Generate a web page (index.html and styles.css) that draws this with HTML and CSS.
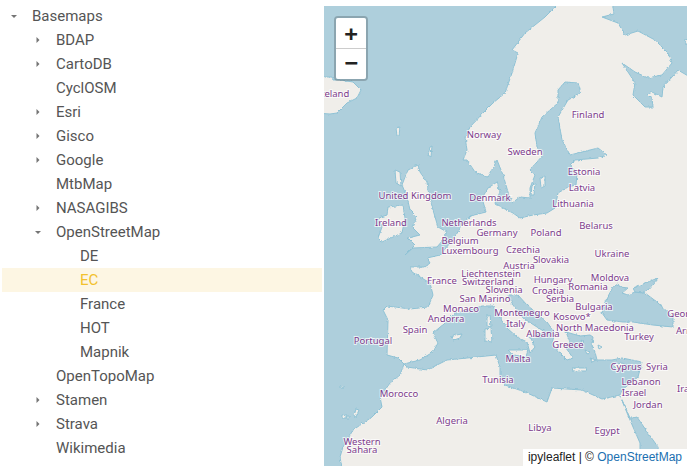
FILE: index.html
```html
<!DOCTYPE html>
<html lang="en">
<head>
<meta charset="utf-8">
<title>Basemaps</title>
<link rel="stylesheet" href="styles.css">
</head>
<body>
<main class="page">
  <nav class="tree">
    <div class="row l0"><svg class="caret" viewBox="0 0 24 24"><path d="M9 11h6l-3 3z"/></svg><span>Basemaps</span></div>
    <div class="row l1"><svg class="caret" viewBox="0 0 24 24"><path d="M10.500 9v6l3-3z"/></svg><span>BDAP</span></div>
    <div class="row l1"><svg class="caret" viewBox="0 0 24 24"><path d="M10.500 9v6l3-3z"/></svg><span>CartoDB</span></div>
    <div class="row l1"><i class="caret"></i><span>CyclOSM</span></div>
    <div class="row l1"><svg class="caret" viewBox="0 0 24 24"><path d="M10.500 9v6l3-3z"/></svg><span>Esri</span></div>
    <div class="row l1"><svg class="caret" viewBox="0 0 24 24"><path d="M10.500 9v6l3-3z"/></svg><span>Gisco</span></div>
    <div class="row l1"><svg class="caret" viewBox="0 0 24 24"><path d="M10.500 9v6l3-3z"/></svg><span>Google</span></div>
    <div class="row l1"><i class="caret"></i><span>MtbMap</span></div>
    <div class="row l1"><svg class="caret" viewBox="0 0 24 24"><path d="M10.500 9v6l3-3z"/></svg><span>NASAGIBS</span></div>
    <div class="row l1"><svg class="caret" viewBox="0 0 24 24"><path d="M9 11h6l-3 3z"/></svg><span>OpenStreetMap</span></div>
    <div class="row l2"><i class="caret"></i><span>DE</span></div>
    <div class="row l2 active"><i class="caret"></i><span>EC</span></div>
    <div class="row l2"><i class="caret"></i><span>France</span></div>
    <div class="row l2"><i class="caret"></i><span>HOT</span></div>
    <div class="row l2"><i class="caret"></i><span>Mapnik</span></div>
    <div class="row l1"><i class="caret"></i><span>OpenTopoMap</span></div>
    <div class="row l1"><svg class="caret" viewBox="0 0 24 24"><path d="M10.500 9v6l3-3z"/></svg><span>Stamen</span></div>
    <div class="row l1"><svg class="caret" viewBox="0 0 24 24"><path d="M10.500 9v6l3-3z"/></svg><span>Strava</span></div>
    <div class="row l1"><i class="caret"></i><span>Wikimedia</span></div>
  </nav>
  <section class="map">
    <svg class="tiles" viewBox="324 6 363 460">
      <defs>
        <filter id="rough" x="-5%" y="-5%" width="110%" height="110%">
          <feTurbulence type="fractalNoise" baseFrequency="0.3" numOctaves="2" seed="4" result="n"/>
          <feDisplacementMap in="SourceGraphic" in2="n" xChannelSelector="R" yChannelSelector="G" scale="3"/>
          <feGaussianBlur stdDeviation="0.3"/>
        </filter>
      </defs>
      <g filter="url(#rough)">
        <path class="land" d="M562 0L612 0L614 14L602 17L618 23L625 35L638 31L655 40L668 53L672 63L662 75L648 78L635 72L622 63L630 75L635 83L633 95L645 107L653 107L652 98L647 95L652 92L662 97L663 87L672 77L678 70L695 80L695 475L343 475L340 457L343 447L353 430L372 417L382 407L380 397L390 383L400 375L404 364L398 358L387 355L388 320L383 310L387 306L410 309L428 307L433 295L430 283L412 272L410 267L425 267L430 263L427 258L440 255L450 243L456 235L462 225L470 216L486 212L482 198L488 188L497 182L500 192L495 203L503 208L513 213L520 218L533 215L547 213L555 208L558 193L568 187L576 185L577 173L570 165L575 160L598 158L607 155L598 148L570 155L562 140L558 117L568 100L581 93L578 83L565 82L558 90L558 103L542 117L535 133L537 147L543 155L530 170L535 175L530 188L530 198L520 197L512 203L508 192L503 175L497 160L493 168L487 177L475 172L467 160L463 160L467 150L465 137L470 127L483 113L493 103L505 93L512 73L518 53L512 50L525 33L545 17Z"/>
        <path class="land" d="M324 77L332 77L333 80L340 80L353 82L361 90L357 98L347 103L337 113L330 114L315 113Z"/>
        <path class="land" d="M418 165L420 172L427 182L428 190L433 210L438 227L447 232L443 240L437 247L413 248L405 255L415 245L408 238L420 235L412 227L417 217L410 210L407 197L402 185L405 177L408 170Z"/>
        <path class="land" d="M388 207L403 205L405 218L402 233L382 242L378 238L382 227L378 218L387 215Z"/>
        <path class="land" d="M396 128L400 127L399 136L397 136Z"/>
        <path class="land" d="M430 147L432 146L431 157L428 155Z"/>
        <path class="land" d="M395 170L400 172L401 186L396 183Z"/>
        <path class="land" d="M340 386L344 386L344 388L340 388Z"/>
        <path class="land" d="M342 415L346 414L346 418L342 418ZM347 416L349 416L349 419L347 419ZM356 409L359 410L356 417L354 416Z"/>
        <path class="land" d="M684 40L695 38L695 46L686 44Z"/>
        <path class="sea" d="M404 364L420 360L433 352L438 343L433 333L445 323L455 313L470 310L482 306L493 306L497 314L507 328L517 337L527 342L530 353L535 347L530 338L535 335L545 332L537 327L523 318L513 305L508 295L518 295L527 305L547 322L555 333L552 343L560 353L567 360L573 358L566 348L570 342L566 332L580 336L590 335L593 337L592 345L595 352L597 360L612 360L622 358L642 362L638 377L622 390L620 395L602 399L582 390L552 388L547 402L525 392L505 385L500 377L500 367L496 355L467 358L447 360L427 370L407 367Z"/>
        <path class="sea" d="M605 302L613 287L618 284L620 287L628 288L622 293L628 295L635 292L645 293L657 302L673 317L673 327L653 325L633 322L623 322L607 320L602 313Z"/>
        <path class="sea" d="M633 288L648 282L658 278L648 290L643 293L635 292Z"/>
        <path class="sea" d="M620 396L624 404L630 418L633 418L637 417L648 433L658 447L660 470L640 470L640 443L630 420Z"/>
        <path class="land" d="M487 315L490 315L491 327L487 326ZM485 329L491 328L492 342L485 341Z"/>
        <path class="land" d="M508 350L528 350L526 357L514 355Z"/>
        <path class="land" d="M572 368L587 368L586 371L573 371Z"/>
        <path class="land" d="M612 365L622 363L628 366L618 369Z"/>
        <path class="land" d="M451 337L456 335L462 334L460 338L454 340Z"/>
        <path class="land" d="M540 178L545 176L545 186L541 188ZM532 186L535 183L534 195L531 195Z"/>
        <path class="land" d="M598 345L602 347L599 349ZM585 350L590 352L587 354ZM581 340L584 342L582 344ZM590 358L596 360L592 362Z"/>
      </g>
      <g class="labels">
        <text x="333" y="97">Iceland</text>
        <text x="588" y="118">Finland</text>
        <text x="484" y="138">Norway</text>
        <text x="525" y="155">Sweden</text>
        <text x="584" y="175">Estonia</text>
        <text x="582" y="191">Latvia</text>
        <text x="573" y="207">Lithuania</text>
        <text x="596" y="229">Belarus</text>
        <text x="415" y="199">United Kingdom</text>
        <text x="490" y="201">Denmark</text>
        <text x="391" y="226">Ireland</text>
        <text x="469" y="226">Netherlands</text>
        <text x="497" y="236">Germany</text>
        <text x="546" y="236">Poland</text>
        <text x="460" y="244">Belgium</text>
        <text x="470" y="254">Luxembourg</text>
        <text x="523" y="253">Czechia</text>
        <text x="612" y="257">Ukraine</text>
        <text x="551" y="263">Slovakia</text>
        <text x="519" y="269">Austria</text>
        <text x="491" y="277">Liechtenstein</text>
        <text x="488" y="285">Switzerland</text>
        <text x="504" y="293">Slovenia</text>
        <text x="553" y="283">Hungary</text>
        <text x="610" y="281">Moldova</text>
        <text x="588" y="290">Romania</text>
        <text x="442" y="284">France</text>
        <text x="548" y="294">Croatia</text>
        <text x="485" y="302">San Marino</text>
        <text x="560" y="302">Serbia</text>
        <text x="594" y="310">Bulgaria</text>
        <text x="461" y="312">Monaco</text>
        <text x="446" y="322">Andorra</text>
        <text x="522" y="316">Montenegro</text>
        <text x="572" y="320">Kosovo*</text>
        <text x="415" y="333">Spain</text>
        <text x="516" y="327">Italy</text>
        <text x="595" y="331">North Macedonia</text>
        <text x="543" y="337">Albania</text>
        <text x="639" y="340">Turkey</text>
        <text x="373" y="344">Portugal</text>
        <text x="568" y="348">Greece</text>
        <text x="518" y="362">Malta</text>
        <text x="626" y="370">Cyprus</text>
        <text x="657" y="370">Syria</text>
        <text x="641" y="385">Lebanon</text>
        <text x="498" y="383">Tunisia</text>
        <text x="634" y="396">Israel</text>
        <text x="399" y="397">Morocco</text>
        <text x="648" y="408">Jordan</text>
        <text x="452" y="424">Algeria</text>
        <text x="540" y="431">Libya</text>
        <text x="607" y="434">Egypt</text>
        <text x="362" y="445">Western</text>
        <text x="362" y="453">Sahara</text>
        <text x="685" y="317">Georgia</text>
        <text x="695" y="334">Armenia</text>
        <text x="711" y="327">Azerbaijan</text>
        <text x="686" y="392">Iran</text>
      </g>
    </svg>
    <div class="zoom">
      <a class="zoom-btn">+</a>
      <a class="zoom-btn">−</a>
    </div>
    <div class="attribution">ipyleaflet | © <a class="osm">OpenStreetMap</a></div>
  </section>
</main>
</body>
</html>
```
FILE: styles.css
```css
* { box-sizing: border-box; }
html, body { margin: 0; height: 100%; background: #fff; overflow: hidden; }
.page { display: flex; align-items: flex-start; padding-left: 2px; gap: 2px; }
.tree {
  width: 320px;
  margin-top: 4px;
  font: 15px/24px Roboto, "Liberation Sans", sans-serif;
  color: #555;
}
.row { display: flex; align-items: center; height: 24px; }
.row span { margin-left: 6px; }
.l1 { padding-left: 24px; }
.l2 { padding-left: 48px; }
.active { background: #fdf6e3; color: #f2c12e; }
.caret { flex: none; display: block; width: 24px; height: 24px; }
.caret path { fill: #757575; }
.map {
  position: relative;
  flex: none;
  width: 363px;
  height: 460px;
  margin-top: 6px;
  background: #aecfdc;
  overflow: hidden;
}
.tiles { display: block; width: 363px; height: 460px; }
.land { fill: #f0eeea; stroke: #8fc2d5; stroke-width: 1; }
.sea { fill: #aecfdc; stroke: #8fc2d5; stroke-width: 1; }
.labels text {
  font: 9.500px "Noto Sans", "DejaVu Sans", sans-serif;
  text-anchor: middle;
  fill: #7d3c8c;
  stroke: #fff;
  stroke-width: 2px;
  stroke-opacity: .7;
  paint-order: stroke;
}
.zoom {
  position: absolute;
  top: 10px;
  left: 10px;
  border: 2px solid rgba(0, 0, 0, .2);
  border-radius: 4px;
  background-clip: padding-box;
}
.zoom-btn {
  display: block;
  width: 30px;
  height: 30px;
  background: #fff;
  color: #222;
  font: bold 22px/31px "DejaVu Sans Mono", "Liberation Mono", monospace;
  text-align: center;
}
.zoom-btn:first-child { height: 31px; border-bottom: 1px solid #ccc; border-radius: 2px 2px 0 0; }
.zoom-btn:last-child { border-radius: 0 0 2px 2px; line-height: 28px; }
.attribution {
  position: absolute;
  right: 0;
  bottom: 0;
  padding: 0 5px;
  background: #fff;
  color: #222;
  font: 12px/17px "Liberation Sans", Arial, sans-serif;
}
.osm { color: #1a6fb0; }
```
